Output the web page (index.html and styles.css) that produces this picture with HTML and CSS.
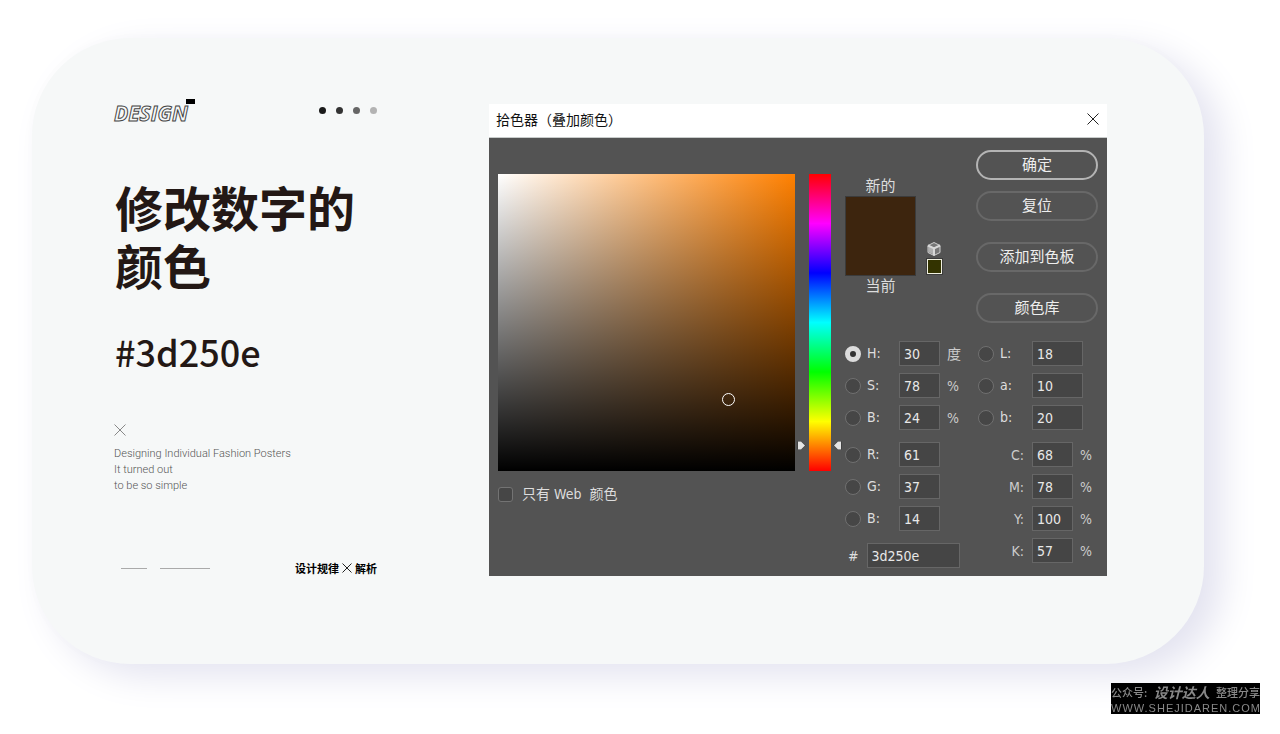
FILE: index.html
```html
<!DOCTYPE html>
<html lang="zh-CN">
<head>
<meta charset="utf-8">
<title>修改数字的颜色</title>
<link rel="stylesheet" href="styles.css">
</head>
<body>
<main class="card">
  <section class="intro">
    <header class="intro-top">
      <span class="logo">DESIGN</span>
      <span class="dots"><i class="dot dot-1"></i><i class="dot dot-2"></i><i class="dot dot-3"></i><i class="dot dot-4"></i></span>
    </header>
    <h1 class="title">修改数字的<br>颜色</h1>
    <p class="hex">#3d250e</p>
    <svg class="cross" viewBox="0 0 12 12" aria-hidden="true"><path d="M.5.5l11 11M11.5.5l-11 11"/></svg>
    <p class="blurb">Designing Individual Fashion Posters<br>It turned out<br>to be so simple</p>
    <footer class="intro-foot">
      <span class="rules"><i class="rule"></i><i class="rule rule-long"></i></span>
      <span class="tag">设计规律<svg class="tag-cross" viewBox="0 0 10 10" aria-hidden="true"><path d="M.5.5l9 9M9.5.5l-9 9"/></svg>解析</span>
    </footer>
  </section>

  <section class="dialog" aria-label="拾色器">
    <header class="titlebar">
      <h2 class="dialog-title">拾色器（叠加颜色）</h2>
      <button class="close" aria-label="关闭"><svg viewBox="0 0 12 12"><path d="M.5.5l11 11M11.5.5l-11 11"/></svg></button>
    </header>
    <div class="panel">
      <div class="picker">
        <div class="field"><span class="field-ring"></span></div>
        <label class="web"><input type="checkbox" class="check">只有 Web&nbsp; 颜色</label>
      </div>
      <div class="hue">
        <svg class="thumb thumb-left" viewBox="0 0 9 11"><path d="M1 1.5h3l4 4-4 4H1z"/></svg>
        <svg class="thumb thumb-right" viewBox="0 0 9 11"><path d="M8 1.5H5l-4 4 4 4h3z"/></svg>
      </div>
      <div class="side">
        <div class="side-top">
          <div class="preview">
            <span class="preview-label">新的</span>
            <span class="swatch"></span>
            <span class="preview-label">当前</span>
          </div>
          <div class="websafe">
            <svg class="cube" viewBox="0 0 16 16" aria-hidden="true"><path class="cube-face" d="M8 1.5L14 4.5v7L8 14.5l-6-3v-7z"/><path class="cube-left" d="M2.5 5.5L7.5 8v5.5l-5-2.5z"/><path class="cube-edge" d="M2 4.5l6 3 6-3M8 7.5v7"/></svg>
            <span class="safe-swatch"></span>
          </div>
          <div class="buttons">
            <button class="btn btn-main">确定</button>
            <button class="btn">复位</button>
            <button class="btn btn-apart">添加到色板</button>
            <button class="btn btn-apart">颜色库</button>
          </div>
        </div>
        <div class="values">
          <div class="col">
            <div class="group">
              <div class="row"><input class="radio" type="radio" name="ch" id="r-h" checked><label for="r-h">H:</label><input class="num" value="30" aria-label="H"><span class="unit">度</span></div>
              <div class="row"><input class="radio" type="radio" name="ch" id="r-s"><label for="r-s">S:</label><input class="num" value="78" aria-label="S"><span class="unit">%</span></div>
              <div class="row"><input class="radio" type="radio" name="ch" id="r-v"><label for="r-v">B:</label><input class="num" value="24" aria-label="B"><span class="unit">%</span></div>
            </div>
            <div class="group">
              <div class="row"><input class="radio" type="radio" name="ch" id="r-r"><label for="r-r">R:</label><input class="num" value="61" aria-label="R"></div>
              <div class="row"><input class="radio" type="radio" name="ch" id="r-g"><label for="r-g">G:</label><input class="num" value="37" aria-label="G"></div>
              <div class="row"><input class="radio" type="radio" name="ch" id="r-b"><label for="r-b">B:</label><input class="num" value="14" aria-label="B"></div>
            </div>
            <div class="hexrow"><label class="hash" for="hex">#</label><input class="num num-hex" id="hex" value="3d250e"></div>
          </div>
          <div class="col">
            <div class="group">
              <div class="row"><input class="radio" type="radio" name="ch" id="r-l"><label for="r-l">L:</label><input class="num num-wide" value="18" aria-label="L"></div>
              <div class="row"><input class="radio" type="radio" name="ch" id="r-la"><label for="r-la">a:</label><input class="num num-wide" value="10" aria-label="a"></div>
              <div class="row"><input class="radio" type="radio" name="ch" id="r-lb"><label for="r-lb">b:</label><input class="num num-wide" value="20" aria-label="b"></div>
            </div>
            <div class="group">
              <div class="row"><label class="ink" for="c">C:</label><input class="num" id="c" value="68"><span class="unit">%</span></div>
              <div class="row"><label class="ink" for="m">M:</label><input class="num" id="m" value="78"><span class="unit">%</span></div>
              <div class="row"><label class="ink" for="y">Y:</label><input class="num" id="y" value="100"><span class="unit">%</span></div>
              <div class="row"><label class="ink" for="k">K:</label><input class="num" id="k" value="57"><span class="unit">%</span></div>
            </div>
          </div>
        </div>
      </div>
    </div>
  </section>
</main>
<aside class="mark">
  <span class="mark-top"><span>公众号:</span><b class="mark-name">设计达人</b><span>整理分享</span></span>
  <span class="mark-url">WWW.SHEJIDAREN.COM</span>
</aside>
</body>
</html>
```

FILE: styles.css
```css
* { box-sizing: border-box; }
body {
  margin: 0;
  min-height: 100vh;
  padding: 38px 76px 70px 32px;
  background: #fff;
  font-family: "Noto Sans", "Noto Sans CJK SC", sans-serif;
}
h1, h2, p { margin: 0; }
button, input { font: inherit; color: inherit; margin: 0; }
svg { display: block; fill: none; }

.card {
  display: flex;
  justify-content: space-between;
  gap: 48px;
  padding: 66px 97px 88px 82px;
  border-radius: 98px;
  background: #f6f8f8;
  box-shadow: 18px 12px 36px #e3e3f0, 0 0 12px #fcfcfc;
}

.intro { display: flex; flex-direction: column; flex: 0 0 263px; color: #231815; }
.intro-top { display: flex; justify-content: space-between; height: 16px; }
.logo {
  position: relative;
  font: italic 700 21px/18px "Open Sans", sans-serif;
  color: #f6f8f8;
  -webkit-text-stroke: 1px #444;
}
.logo::after {
  content: "";
  position: absolute;
  right: -7px;
  top: -5px;
  width: 9px;
  height: 5px;
  background: #000;
}
.dots { display: flex; gap: 10px; padding-top: 3px; }
.dot { width: 7px; height: 7px; border-radius: 50%; }
.dot-1 { background: #1a1a1a; }
.dot-2 { background: #333; }
.dot-3 { background: #666; }
.dot-4 { background: #b3b3b3; }
.title { margin-top: 57px; padding-left: 1px; font: 700 48px/58px "Noto Sans CJK SC", sans-serif; white-space: nowrap; }
.hex { margin-top: 36px; padding-left: 1px; font: 500 36px/44px "Noto Sans CJK SC", sans-serif; }
.cross { width: 12px; height: 12px; margin-top: 51px; stroke: #888; }
.blurb { margin-top: 10px; font: 300 11px/16px Roboto, sans-serif; color: #555; white-space: nowrap; }
.intro-foot { display: flex; justify-content: space-between; align-items: center; margin-top: auto; }
.rules { display: flex; gap: 13px; padding-left: 7px; }
.rule { width: 26px; height: 1px; background: #aaa; }
.rule-long { width: 50px; }
.tag { display: flex; align-items: center; gap: 3px; font: 700 11px/16px "Noto Sans CJK SC", sans-serif; color: #000; }
.tag-cross { width: 10px; height: 10px; stroke: #222; }

.dialog { flex: 0 1 618px; background: #535353; color: #ddd; }
.titlebar {
  display: flex;
  justify-content: space-between;
  align-items: center;
  height: 34px;
  padding: 0 8px 3px 7px;
  background: #fff;
  border-bottom: 1px solid #c8cccb;
}
.dialog-title { font: 400 14px/20px "Noto Sans CJK SC", sans-serif; color: #111; }
.close { padding: 0; border: 0; background: none; }
.close svg { width: 12px; height: 12px; stroke: #222; }
.panel { display: flex; padding: 0 9px 8px; font: 14px/20px "DejaVu Sans Condensed", "Noto Sans", "Noto Sans CJK SC", sans-serif; }
.picker { flex: 1; margin-top: 36px; }
.field {
  position: relative;
  height: 297px;
  background: linear-gradient(to bottom, transparent, #000), linear-gradient(to right, #fff, #ff8000);
}
.field-ring {
  position: absolute;
  left: 78%;
  top: 76%;
  width: 13px;
  height: 13px;
  margin: -7px 0 0 -8px;
  border: 1px solid #fff;
  border-radius: 50%;
}
.web { display: flex; align-items: center; gap: 9px; margin-top: 13px; }
.check { appearance: none; width: 15px; height: 15px; border: 1px solid #737373; border-radius: 3px; background: #464646; }
.hue {
  position: relative;
  flex: 0 0 22px;
  height: 297px;
  margin: 36px 14px 0;
  background: linear-gradient(to bottom, #f00, #f0f, #00f, #0ff, #0f0, #ff0, #f00);
}
.thumb { position: absolute; top: 266px; width: 9px; height: 11px; fill: #e4e4e4; stroke: #333; stroke-width: 1px; paint-order: stroke; }
.thumb-left { right: 100%; margin-right: 3px; }
.thumb-right { left: 100%; margin-left: 2px; }

.side { flex: 0 0 253px; }
.side-top { display: flex; padding-top: 12px; }
.preview { display: flex; flex-direction: column; align-items: center; padding-top: 26px; }
.preview-label { font-size: 15px; }
.swatch { width: 71px; height: 80px; border: 1px solid #3b3b3b; background: #3d250e; }
.websafe { display: flex; flex-direction: column; align-items: center; gap: 2px; margin-left: 10px; padding-top: 91px; }
.cube { width: 16px; height: 16px; }
.cube-face { fill: #777; stroke: #d0d0d0; }
.cube-left { fill: #b0b0b0; }
.cube-edge { stroke: #d8d8d8; stroke-width: 2px; }
.safe-swatch { width: 15px; height: 15px; border: 1px solid #f0f0e0; outline: 1px solid #3b3b3b; background: #330; }
.buttons { display: flex; flex-direction: column; flex: 0 0 122px; gap: 11px; margin-left: auto; }
.btn { height: 30px; padding: 0; border: 2px solid #686868; border-radius: 15px; background: none; font-size: 15px; color: #eee; }
.btn-main { border-color: #b4b4b4; }
.btn-apart { margin-top: 10px; }

.values { display: flex; justify-content: space-between; margin-top: 18px; }
.col { display: flex; flex-direction: column; gap: 12px; width: 120px; }
.group { display: flex; flex-direction: column; gap: 7px; }
.row { display: grid; grid-template-columns: 22px 32px auto 1fr; align-items: center; height: 25px; }
.row label { padding-bottom: 2px; }
.radio { appearance: none; width: 16px; height: 16px; border: 1px solid #707070; border-radius: 50%; background: #464646; }
.radio:checked { border: 5px solid #dcdcdc; background: #333; }
.num { width: 41px; height: 25px; padding: 0 4px; border: 1px solid #666; border-radius: 0; background: #454545; color: #e8e8e8; }
.num-wide { width: 51px; }
.unit { padding-left: 7px; color: #ccc; }
.row .ink { grid-column: 1 / 3; padding: 0 8px 0 0; text-align: right; color: #ccc; }
.hexrow { display: flex; align-items: center; gap: 8px; padding-left: 3px; }
.num-hex { width: 93px; }

.mark {
  position: fixed;
  right: 20px;
  bottom: 20px;
  display: flex;
  flex-direction: column;
  width: 149px;
  height: 31px;
  background: #000;
  color: #888;
  white-space: nowrap;
}
.mark-top { display: flex; justify-content: space-between; align-items: center; font: 500 11px/19px "Noto Sans CJK SC", sans-serif; }
.mark-name { font-size: 14px; font-style: italic; font-weight: 700; }
.mark-url { font: 11px/12px "Liberation Sans", sans-serif; letter-spacing: 1px; }
```
